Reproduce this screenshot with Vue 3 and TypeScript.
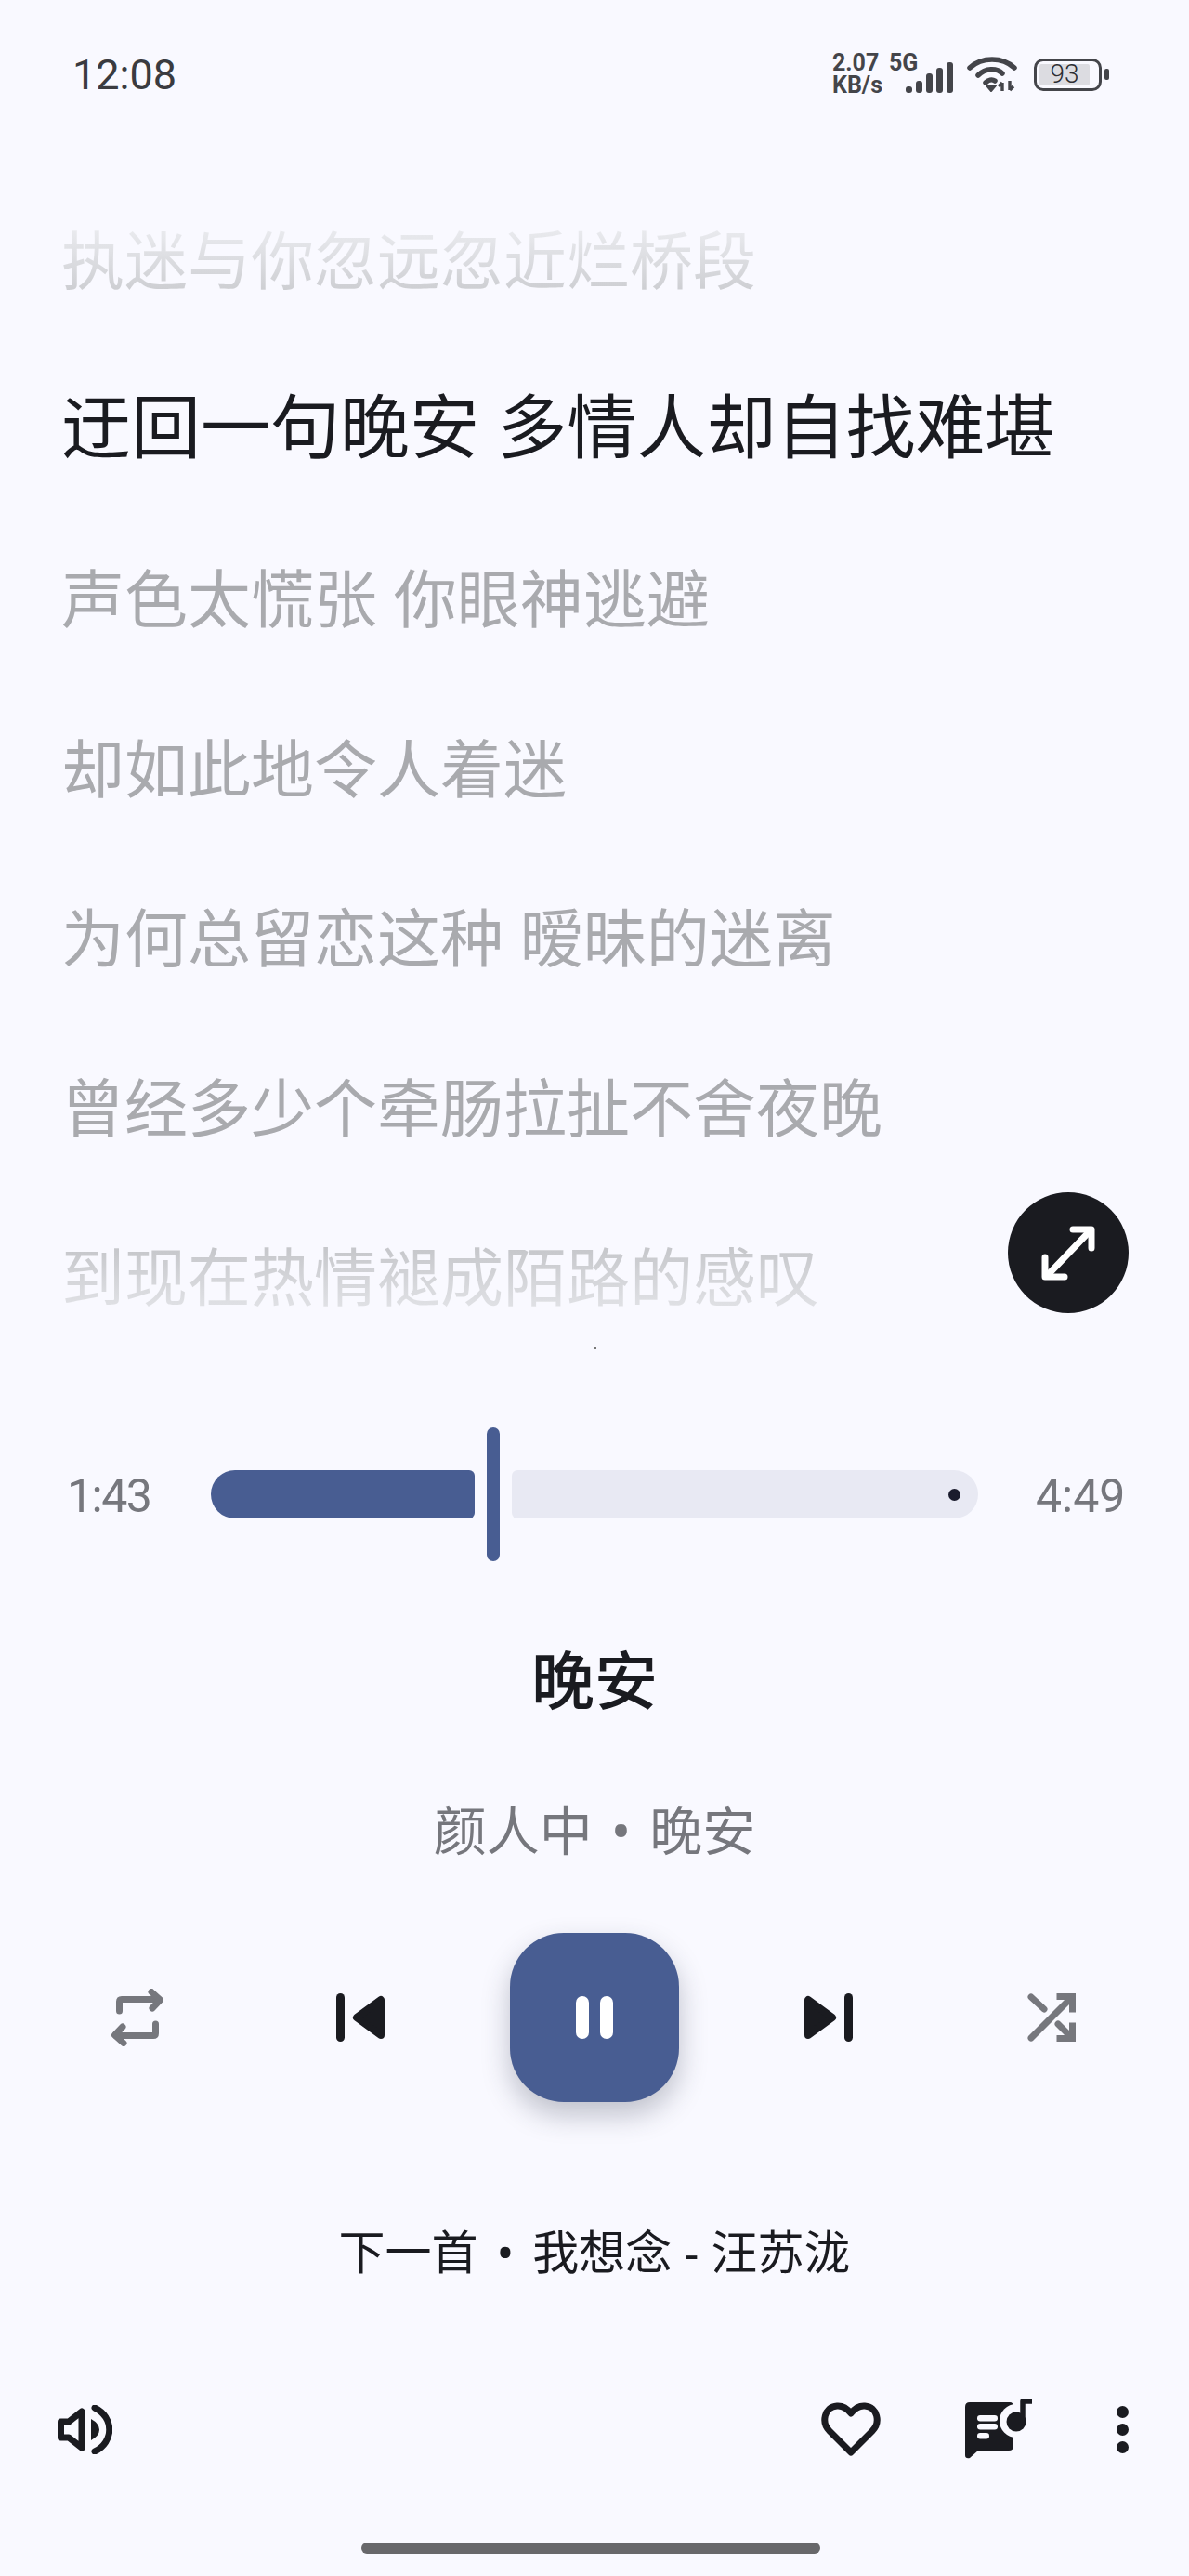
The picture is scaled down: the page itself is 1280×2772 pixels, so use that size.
<script setup lang="ts">
const lyrics = [
  { text: '执迷与你忽远忽近烂桥段', cls: 'fade-top' },
  { text: '迂回一句晚安 多情人却自找难堪', cls: 'active' },
  { text: '声色太慌张 你眼神逃避', cls: '' },
  { text: '却如此地令人着迷', cls: '' },
  { text: '为何总留恋这种 暧昧的迷离', cls: '' },
  { text: '曾经多少个牵肠拉扯不舍夜晚', cls: '' },
  { text: '到现在热情褪成陌路的感叹', cls: 'fade-bottom' },
];
const signalBars = [7, 13, 21, 27, 33];
</script>

<template>
  <div class="screen">
    <header class="status">
      <span class="clock">12:08</span>
      <div class="status-right">
        <div class="speed"><span>2.07</span><span>KB/s</span></div>
        <span class="net">5G</span>
        <div class="signal">
          <i v-for="h in signalBars" :key="h" :style="{ height: h + 'px' }"></i>
        </div>
        <svg class="wifi" width="54" height="38" viewBox="0 0 54 38" fill="none" stroke="#44454a" stroke-width="5.5" stroke-linecap="round">
          <path d="M3 12 C16 0 38 0 51 12" />
          <path d="M12 20 C20 12 32 12 38 18" />
          <path d="M20 28 C23 25 27 24 30 26" />
          <path d="M21 31 L26 37 L31 31 Z" fill="#44454a" stroke-width="2" stroke-linejoin="round" />
          <path d="M38 37 V28 M38 28 L34 32 M46 26 V36 M46 36 L50 32" stroke-width="3.4" stroke-linecap="butt" />
        </svg>
        <div class="battery">
          <div class="battery-body"><span class="battery-fill">93</span></div>
          <i class="battery-nub"></i>
        </div>
      </div>
    </header>

    <section class="lyrics">
      <p v-for="line in lyrics" :key="line.text" class="line" :class="line.cls">{{ line.text }}</p>
      <i class="speck"></i>
      <button class="fab">
        <svg width="58" height="59" viewBox="0 0 58 59" fill="none" stroke="#fff" stroke-width="7" stroke-linecap="round" stroke-linejoin="round">
          <path d="M6 54 L52 6" />
          <path d="M34 4 H54 V24" />
          <path d="M4 34 V55 H25" />
        </svg>
      </button>
    </section>

    <section class="progress">
      <span class="time">1:43</span>
      <div class="bar">
        <div class="bar-done"></div>
        <div class="bar-thumb"></div>
        <div class="bar-rest"><i class="bar-dot"></i></div>
      </div>
      <span class="time time-end">4:49</span>
    </section>

    <h1 class="title">晚安</h1>
    <p class="artist">颜人中<span class="sep">•</span>晚安</p>

    <section class="controls">
      <svg class="repeat" width="56" height="62" viewBox="0 0 56 62" fill="none" stroke="#76777d" stroke-width="7" stroke-linecap="round" stroke-linejoin="round">
        <path d="M8.5 24 V14 Q8.5 11.5 11 11.5 H51" />
        <path d="M43 3.5 L52.5 12 L44 21" />
        <path d="M47.5 38 V48 Q47.5 50.5 45 50.5 H5" />
        <path d="M13 58.5 L3.5 50 L12 41" />
      </svg>
      <svg width="52" height="52" viewBox="0 0 52 52" fill="#1a1b20">
        <rect x="0" y="0" width="9" height="52" rx="4.5" />
        <path d="M22 26 L48 7 V45 Z" stroke="#1a1b20" stroke-width="8" stroke-linejoin="round" />
      </svg>
      <button class="play">
        <i></i><i></i>
      </button>
      <svg class="skip-next" width="52" height="52" viewBox="0 0 52 52" fill="#1a1b20">
        <path d="M4 7 V45 L30 26 Z" stroke="#1a1b20" stroke-width="8" stroke-linejoin="round" />
        <rect x="43" y="0" width="9" height="52" rx="4.5" />
      </svg>
      <svg width="52" height="52" viewBox="0 0 52 52" fill="none" stroke="#76777d" stroke-width="7" stroke-linecap="round">
        <path d="M4 48 L47 5" />
        <path d="M4 4 L18 17" />
        <path d="M33 33 L47 47" />
        <path d="M35 3.5 H48.5 V17" stroke-linecap="square" />
        <path d="M48.5 35 V48.5 H35" stroke-linecap="square" />
      </svg>
    </section>

    <p class="next">下一首<span class="sep">•</span>我想念 - 汪苏泷</p>

    <footer class="actions">
      <svg width="59" height="53" viewBox="0 0 59 53" fill="none" stroke="#1a1b20" stroke-width="7" stroke-linecap="round" stroke-linejoin="round">
        <path d="M3.5 18 H12 L26 7 V46 L12 35 H3.5 Z" />
        <path d="M36 15 Q45 20 45 26.5 Q45 33 36 38 Z" fill="#1a1b20" stroke="none" />
        <path d="M40 3 C61 13 61 40 40 50" />
      </svg>
      <div class="actions-right">
        <svg width="64" height="58" viewBox="0 0 64 58" fill="none" stroke="#1a1b20" stroke-width="7" stroke-linejoin="round">
          <path d="M32 54 L9 31 C0 22 3 5 17 4 C24 3.5 29 8 32 12 C35 8 40 3.5 47 4 C61 5 64 22 55 31 Z" />
        </svg>
        <svg class="queue" width="72" height="64" viewBox="0 0 72 64">
          <path d="M5 3 H48 Q52 3 52 8 V50 Q52 55 47 55 H14 L5 63 Q0 64 0 60 V8 Q0 3 5 3 Z" fill="#1a1b20" />
          <circle cx="55" cy="23" r="18" fill="#f9f9ff" />
          <circle cx="55" cy="24" r="10.5" fill="#1a1b20" />
          <path d="M62 24 V2 H71" fill="none" stroke="#1a1b20" stroke-width="5.5" stroke-linecap="round" stroke-linejoin="round" />
          <rect x="13" y="17" width="22" height="6.5" rx="3.2" fill="#f9f9ff" />
          <rect x="13" y="26" width="22" height="6.5" rx="3.2" fill="#f9f9ff" />
          <rect x="13" y="36" width="13" height="6.5" rx="3.2" fill="#f9f9ff" />
        </svg>
        <div class="dots"><i></i><i></i><i></i></div>
      </div>
    </footer>

    <div class="home-bar"></div>
  </div>
</template>

<style scoped>
.screen {
  position: relative;
  width: 1280px;
  height: 2772px;
  overflow: hidden;
  background: #f9f9ff;
  color: #1a1b20;
  font-family: 'Noto Sans', 'Noto Sans CJK SC', sans-serif;
  display: flex;
  flex-direction: column;
}
.status {
  height: 163px;
  flex: none;
  display: flex;
  align-items: center;
  justify-content: space-between;
  padding: 0 86px 3px 78px;
  box-sizing: border-box;
  color: #44454a;
}
.clock {
  font-family: Roboto, sans-serif;
  font-size: 45px;
  color: #3a3b40;
}
.status-right {
  display: flex;
  align-items: center;
}
.speed {
  display: flex;
  flex-direction: column;
  font-family: Roboto, sans-serif;
  font-size: 25px;
  font-weight: 700;
  line-height: 24px;
  width: 61px;
}
.net {
  font-family: Roboto, sans-serif;
  font-size: 25px;
  font-weight: 700;
  align-self: flex-start;
  line-height: 24px;
  width: 18px;
}
.signal {
  display: flex;
  align-items: flex-end;
  gap: 4px;
  height: 33px;
  margin-top: 6px;
}
.signal i {
  width: 7px;
  border-radius: 3px;
  background: #44454a;
}
.wifi {
  margin-left: 15px;
}
.battery {
  display: flex;
  align-items: center;
  margin-left: 18px;
  gap: 3px;
}
.battery-body {
  width: 73px;
  height: 35px;
  border: 3.5px solid #44454a;
  border-radius: 10px;
  padding: 3px;
  box-sizing: border-box;
  display: flex;
}
.battery-fill {
  width: 54px;
  background: #dcdce1;
  border-radius: 2px;
  font-family: Roboto, sans-serif;
  font-weight: 300;
  font-size: 28px;
  line-height: 22px;
  text-align: center;
  color: #2c2d31;
}
.battery-nub {
  width: 5px;
  height: 12px;
  border-radius: 2px;
  background: #44454a;
}
.lyrics {
  position: relative;
  flex: none;
  height: 1285px;
  padding: 26px 0 0 66px;
  box-sizing: border-box;
}
.line {
  margin: 0;
  height: 182.5px;
  line-height: 182.5px;
  font-size: 68px;
  white-space: nowrap;
  color: #a9aaae;
}
.line.fade-top,
.line.fade-bottom {
  width: max-content;
  color: transparent;
  -webkit-background-clip: text;
  background-clip: text;
}
.line.fade-top {
  background-image: linear-gradient(180deg, #ebecf0 30%, #cdced2 68%);
}
.line.fade-bottom {
  background-image: linear-gradient(180deg, #c4c5c9 30%, #e2e3e7 70%);
}
.line.active {
  font-size: 75px;
  color: #1a1b20;
  margin: -5px 0 4px;
}
.speck {
  position: absolute;
  left: 640px;
  top: 1287px;
  width: 2px;
  height: 2px;
  background: #777;
}
.fab {
  position: absolute;
  left: 1085px;
  top: 1120px;
  width: 130px;
  height: 130px;
  border: 0;
  padding: 0;
  border-radius: 50%;
  background: #1a1b20;
  display: grid;
  place-items: center;
}
.progress {
  flex: none;
  height: 144px;
  margin-top: 88px;
  display: grid;
  grid-template-columns: 155px 826px 1fr;
  align-items: center;
  padding-left: 72px;
}
.time {
  font-family: Roboto, sans-serif;
  font-size: 50px;
  letter-spacing: -1.5px;
  color: #76777d;
  position: relative;
  top: 2px;
}
.time-end {
  padding-left: 62px;
  letter-spacing: 0;
}
.bar {
  display: flex;
  align-items: center;
}
.bar-done {
  width: 284px;
  height: 52px;
  background: #485d92;
  border-radius: 26px 6px 6px 26px;
}
.bar-thumb {
  width: 14px;
  height: 144px;
  margin: 0 13px;
  border-radius: 7px;
  background: #485d92;
}
.bar-rest {
  flex: 1;
  height: 52px;
  background: #e8e9f3;
  border-radius: 6px 26px 26px 6px;
  display: flex;
  align-items: center;
  justify-content: flex-end;
  padding-right: 19px;
}
.bar-dot {
  width: 13px;
  height: 13px;
  border-radius: 50%;
  background: #1a1b2c;
}
.title {
  margin: 84px 0 0;
  height: 88px;
  line-height: 88px;
  text-align: center;
  font-size: 68px;
  font-weight: 500;
}
.artist {
  margin: 77px 0 0;
  height: 80px;
  line-height: 80px;
  text-align: center;
  font-size: 57px;
  color: #76777d;
}
.sep {
  margin: 0 20px;
}
.controls {
  flex: none;
  height: 182px;
  margin-top: 71px;
  padding-left: 120px;
  display: flex;
  align-items: center;
  gap: 135px;
}
.repeat {
  margin-right: 51px;
}
.skip-next {
  margin-right: 53px;
}
.play {
  width: 182px;
  height: 182px;
  border: 0;
  padding: 0;
  border-radius: 58px;
  background: #485d92;
  box-shadow: 0 14px 30px rgba(40, 45, 70, 0.28);
  display: flex;
  align-items: center;
  justify-content: center;
  gap: 12px;
}
.play i {
  width: 14px;
  height: 46px;
  border-radius: 7px;
  background: #fff;
}
.next {
  margin: 126px 0 0;
  height: 70px;
  line-height: 70px;
  text-align: center;
  font-size: 50px;
}
.actions {
  flex: none;
  margin-top: 124px;
  padding: 0 65px 0 62px;
  display: flex;
  align-items: center;
  justify-content: space-between;
}
.actions-right {
  display: flex;
  align-items: center;
  gap: 91px;
}
.dots {
  display: flex;
  flex-direction: column;
  gap: 6px;
}
.dots i {
  width: 13px;
  height: 13px;
  border-radius: 50%;
  background: #1a1b20;
}
.home-bar {
  position: absolute;
  left: 389px;
  top: 2736px;
  width: 494px;
  height: 12px;
  border-radius: 6px;
  background: #68686b;
}
</style>

<style>
html,
body {
  margin: 0;
  background: #f9f9ff;
}
</style>
